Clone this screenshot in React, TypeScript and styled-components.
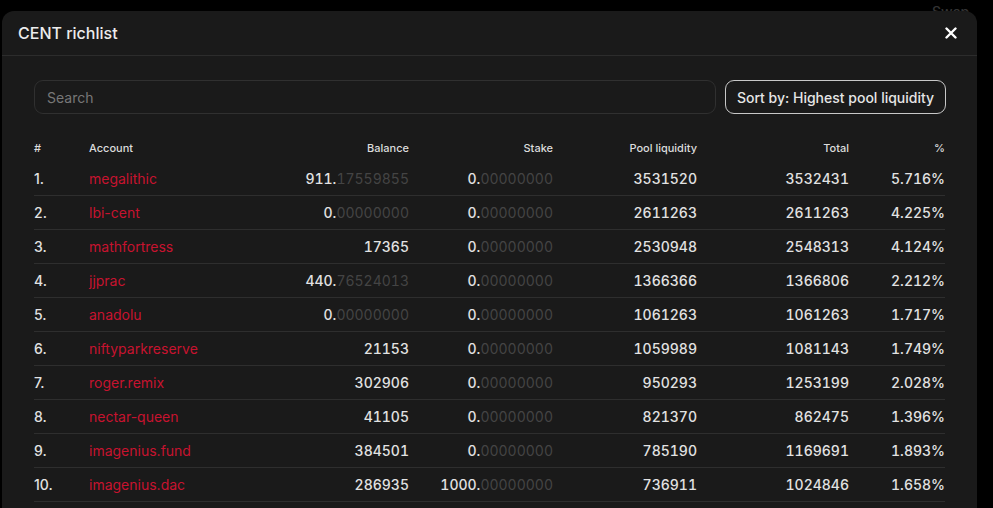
import React from "react";
import styled, { createGlobalStyle } from "styled-components";

const Global = createGlobalStyle`
  html, body { margin: 0; padding: 0; background: #000; height: 100%; overflow: hidden; }
  body { font-family: Inter, "Noto Sans", sans-serif; -webkit-font-smoothing: antialiased; }
  #root { height: 100%; }
`;

const Page = styled.div`
  position: relative;
  height: 100%;
  padding: 11px 0 0 2px;
  box-sizing: border-box;
`;

const BehindText = styled.div`
  position: absolute;
  top: 3px;
  left: 932px;
  font-size: 14px;
  color: #333;
  font-weight: 500;
`;

const Modal = styled.div`
  position: relative;
  width: 975px;
  height: 520px;
  background: #1a1a1a;
  border-radius: 12px 12px 0 0;
  overflow: hidden;
`;

const Header = styled.div`
  height: 44px;
  display: flex;
  align-items: center;
  justify-content: space-between;
  padding: 0 20px 0 16px;
  border-bottom: 1px solid #2c2c2c;
`;

const Title = styled.h2`
  margin: 0;
  font-size: 16px;
  font-weight: 500;
  color: #ececec;
`;

const CloseBtn = styled.button`
  background: none;
  border: none;
  padding: 0;
  display: flex;
  color: #fff;
  cursor: pointer;
`;

const Body = styled.div`
  padding: 24px 31px 0 32px;
`;

const Toolbar = styled.div`
  display: flex;
  gap: 9px;
`;

const Search = styled.input`
  flex: 1;
  height: 34px;
  box-sizing: border-box;
  background: #1a1a1a;
  border: 1px solid #303030;
  border-radius: 9px;
  padding: 0 12px;
  font-family: Inter, sans-serif;
  font-size: 14px;
  color: #ddd;
  outline: none;
  &::placeholder { color: #777; }
`;

const SortButton = styled.button`
  width: 221px;
  height: 34px;
  box-sizing: border-box;
  background: #1a1a1a;
  border: 1px solid #c8c8c8;
  border-radius: 9px;
  font-family: Inter, sans-serif;
  font-size: 14px;
  font-weight: 500;
  color: #e6e6e6;
  padding: 0;
`;

const Table = styled.div`
  margin-top: 20px;
  width: 911px;
`;

const cols = "55px 160px 160px 144px 144px 152px 96px";

const HeadRow = styled.div`
  display: grid;
  grid-template-columns: ${cols};
  height: 28px;
  align-items: center;
`;

const HeadCell = styled.div<{ $right?: boolean }>`
  font-size: 11px;
  font-weight: 500;
  color: #dcdcdc;
  text-align: ${(p) => (p.$right ? "right" : "left")};
`;

const Row = styled.div`
  display: grid;
  grid-template-columns: ${cols};
  height: 34px;
  align-items: center;
  border-bottom: 1px solid #2e2e2e;
  box-sizing: border-box;
`;

const Cell = styled.div<{ $num?: boolean }>`
  font-size: 14px;
  font-weight: 500;
  color: #e2e2e2;
  font-variant-numeric: ${(p) => (p.$num ? "tabular-nums" : "normal")};
  text-align: ${(p) => (p.$num ? "right" : "left")};
  white-space: nowrap;
`;

const AccountLink = styled.a`
  font-size: 14px;
  font-weight: 400;
  color: #c7132f;
  text-decoration: none;
`;

const Frac = styled.span`
  color: #444;
  font-weight: 400;
`;

type R = [string, string, string, string, string, string];

const rows: R[] = [
  ["megalithic", "911.17559855", "0.00000000", "3531520", "3532431", "5.716%"],
  ["lbi-cent", "0.00000000", "0.00000000", "2611263", "2611263", "4.225%"],
  ["mathfortress", "17365", "0.00000000", "2530948", "2548313", "4.124%"],
  ["jjprac", "440.76524013", "0.00000000", "1366366", "1366806", "2.212%"],
  ["anadolu", "0.00000000", "0.00000000", "1061263", "1061263", "1.717%"],
  ["niftyparkreserve", "21153", "0.00000000", "1059989", "1081143", "1.749%"],
  ["roger.remix", "302906", "0.00000000", "950293", "1253199", "2.028%"],
  ["nectar-queen", "41105", "0.00000000", "821370", "862475", "1.396%"],
  ["imagenius.fund", "384501", "0.00000000", "785190", "1169691", "1.893%"],
  ["imagenius.dac", "286935", "1000.00000000", "736911", "1024846", "1.658%"],
];

const Num: React.FC<{ v: string }> = ({ v }) => {
  const i = v.indexOf(".");
  if (i < 0) return <>{v}</>;
  return (
    <>
      {v.slice(0, i + 1)}
      <Frac>{v.slice(i + 1)}</Frac>
    </>
  );
};

export default function App() {
  return (
    <>
      <Global />
      <Page>
        <BehindText>Swap</BehindText>
        <Modal>
          <Header>
            <Title>CENT richlist</Title>
            <CloseBtn aria-label="Close">
              <svg width="12" height="12" viewBox="0 0 12 12">
                <path d="M1.5 1.5 L10.5 10.5 M10.5 1.5 L1.5 10.5" stroke="#fff" strokeWidth="2.4" strokeLinecap="round" />
              </svg>
            </CloseBtn>
          </Header>
          <Body>
            <Toolbar>
              <Search placeholder="Search" />
              <SortButton>Sort by: Highest pool liquidity</SortButton>
            </Toolbar>
            <Table>
              <HeadRow>
                <HeadCell>#</HeadCell>
                <HeadCell>Account</HeadCell>
                <HeadCell $right>Balance</HeadCell>
                <HeadCell $right>Stake</HeadCell>
                <HeadCell $right>Pool liquidity</HeadCell>
                <HeadCell $right>Total</HeadCell>
                <HeadCell $right>%</HeadCell>
              </HeadRow>
              {rows.map((r, idx) => (
                <Row key={r[0]}>
                  <Cell>{idx + 1}.</Cell>
                  <Cell>
                    <AccountLink href="#">{r[0]}</AccountLink>
                  </Cell>
                  <Cell $num><Num v={r[1]} /></Cell>
                  <Cell $num><Num v={r[2]} /></Cell>
                  <Cell $num>{r[3]}</Cell>
                  <Cell $num>{r[4]}</Cell>
                  <Cell $num>{r[5]}</Cell>
                </Row>
              ))}
            </Table>
          </Body>
        </Modal>
      </Page>
    </>
  );
}
